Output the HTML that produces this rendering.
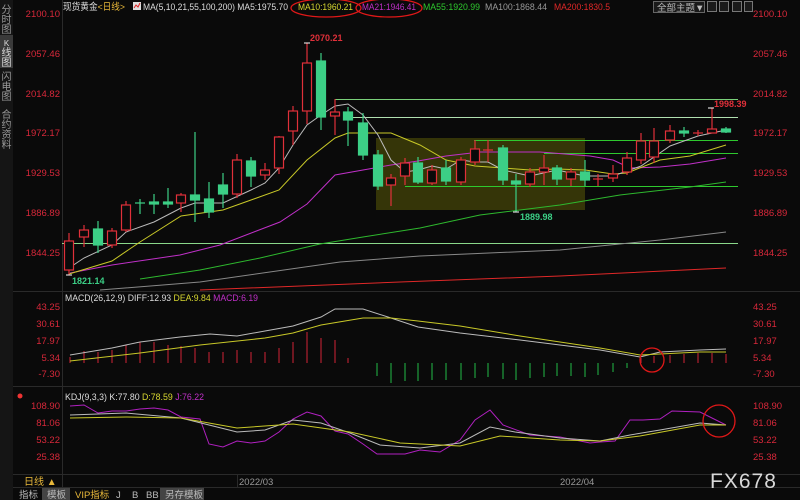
<!DOCTYPE html>
<html><head><meta charset="utf-8"><style>
html,body{margin:0;padding:0;background:#0a0a0a;width:800px;height:500px;overflow:hidden}
svg{display:block;font-family:"Liberation Sans","Noto Sans CJK SC",sans-serif}
</style></head><body>
<svg width="800" height="500" viewBox="0 0 800 500" xmlns="http://www.w3.org/2000/svg">
<rect width="800" height="500" fill="#0a0a0a"/>
<!-- sidebar -->
<rect x="0" y="0" width="13" height="500" fill="#151515"/>
<rect x="0" y="35" width="13" height="33" fill="#3a3a3a"/>
<g fill="#9a9a9a" font-size="10" text-anchor="middle">
<text x="6.5" y="13">分</text><text x="6.5" y="23">时</text><text x="6.5" y="33">图</text>
<text x="6.5" y="46" fill="#ddd" font-size="8">K</text><text x="6.5" y="56" fill="#ddd">线</text><text x="6.5" y="66" fill="#ddd">图</text>
<text x="6.5" y="80">闪</text><text x="6.5" y="90">电</text><text x="6.5" y="100">图</text>
<text x="6.5" y="118">合</text><text x="6.5" y="128">约</text><text x="6.5" y="138">资</text><text x="6.5" y="148">料</text>
</g>
<!-- borders -->
<line x1="62.5" y1="0" x2="62.5" y2="487" stroke="#2a2a2a"/>
<line x1="13" y1="291.5" x2="800" y2="291.5" stroke="#2a2a2a"/>
<line x1="13" y1="386.5" x2="800" y2="386.5" stroke="#2a2a2a"/>
<line x1="13" y1="474.5" x2="800" y2="474.5" stroke="#2a2a2a"/>
<line x1="13" y1="487.5" x2="800" y2="487.5" stroke="#2a2a2a"/>
<!-- axis labels -->
<g fill="#d8283a" font-size="9.5">
<g text-anchor="end">
<text x="60" y="17">2100.10</text><text x="60" y="57">2057.46</text><text x="60" y="97">2014.82</text><text x="60" y="136">1972.17</text><text x="60" y="176">1929.53</text><text x="60" y="216">1886.89</text><text x="60" y="256">1844.25</text>
<text x="60" y="310">43.25</text><text x="60" y="327">30.61</text><text x="60" y="344">17.97</text><text x="60" y="361">5.34</text><text x="60" y="377">-7.30</text>
<text x="60" y="409">108.90</text><text x="60" y="426">81.06</text><text x="60" y="443">53.22</text><text x="60" y="460">25.38</text>
</g>
<text x="753" y="17">2100.10</text><text x="753" y="57">2057.46</text><text x="753" y="97">2014.82</text><text x="753" y="136">1972.17</text><text x="753" y="176">1929.53</text><text x="753" y="216">1886.89</text><text x="753" y="256">1844.25</text>
<text x="753" y="310">43.25</text><text x="753" y="327">30.61</text><text x="753" y="344">17.97</text><text x="753" y="361">5.34</text><text x="753" y="377">-7.30</text>
<text x="753" y="409">108.90</text><text x="753" y="426">81.06</text><text x="753" y="443">53.22</text><text x="753" y="460">25.38</text>
</g>
<!-- header -->
<g font-size="9.5">
<text x="63" y="10" fill="#ddd" textLength="62" lengthAdjust="spacingAndGlyphs">现货黄金<tspan fill="#e8b83a">&lt;日线&gt;</tspan></text>
<rect x="133" y="2" width="8" height="8" fill="#ddd"/><path d="M134 8 L136 5 L138 7 L140 3" stroke="#d22" fill="none"/>
<text x="143" y="10" fill="#ddd" textLength="145" lengthAdjust="spacingAndGlyphs">MA(5,10,21,55,100,200) MA5:1975.70</text>
<text x="298" y="10" fill="#d8d830" textLength="55" lengthAdjust="spacingAndGlyphs">MA10:1960.21</text>
<text x="362" y="10" fill="#c030c8" textLength="54" lengthAdjust="spacingAndGlyphs">MA21:1946.41</text>
<text x="423" y="10" fill="#2ec82e" textLength="57" lengthAdjust="spacingAndGlyphs">MA55:1920.99</text>
<text x="485" y="10" fill="#999" textLength="62" lengthAdjust="spacingAndGlyphs">MA100:1868.44</text>
<text x="554" y="10" fill="#e02828" textLength="56" lengthAdjust="spacingAndGlyphs">MA200:1830.5</text>
<text x="65" y="301" fill="#ddd" textLength="193" lengthAdjust="spacingAndGlyphs">MACD(26,12,9) DIFF:12.93 <tspan fill="#d8d830">DEA:9.84</tspan> <tspan fill="#c030c8">MACD:6.19</tspan></text>
<text x="65" y="400" fill="#ddd" textLength="139" lengthAdjust="spacingAndGlyphs">KDJ(9,3,3) K:77.80 <tspan fill="#d8d830">D:78.59</tspan> <tspan fill="#c030c8">J:76.22</tspan></text>
</g>
<circle cx="20" cy="396" r="2.5" fill="#e33"/>
<rect x="653.5" y="1.5" width="51" height="11" fill="#1a1a1a" stroke="#666"/>
<text x="657" y="11" font-size="9.5" fill="#bbb">全部主题▼</text>
<g fill="#1a1a1a" stroke="#777"><rect x="707.5" y="1.5" width="9" height="10"/><rect x="719.5" y="1.5" width="9" height="10"/><rect x="732.5" y="1.5" width="9" height="10"/><rect x="744.5" y="1.5" width="8" height="10"/></g>
<ellipse cx="326" cy="8" rx="35" ry="9" fill="none" stroke="#e01818" stroke-width="1.3"/>
<ellipse cx="389" cy="8" rx="33" ry="9" fill="none" stroke="#e01818" stroke-width="1.3"/>
<!-- box -->
<rect x="376" y="138" width="209" height="72" fill="#3a3a08" opacity="0.9"/>
<!-- horizontal lines -->
<g stroke-width="1">
<line x1="335" y1="99.5" x2="738" y2="99.5" stroke="#7ad07a"/>
<line x1="348" y1="117.5" x2="738" y2="117.5" stroke="#b0e0b0"/>
<line x1="474" y1="140.5" x2="738" y2="140.5" stroke="#2ec82e"/>
<line x1="544" y1="153.5" x2="738" y2="153.5" stroke="#2ec82e"/>
<line x1="405" y1="186.5" x2="738" y2="186.5" stroke="#2ec82e"/>
<line x1="62" y1="243.5" x2="738" y2="243.5" stroke="#8ad88a"/>
</g>
<!-- MAs -->
<g fill="none" stroke-width="1">
<polyline stroke="#e02828" points="200,290 400,282 560,276 726,268"/>
<polyline stroke="#888" points="100,290 200,282 340,262 420,256 560,250 660,240 726,232"/>
<polyline stroke="#2eb82e" points="140,279 200,270 260,258 320,244 363,237 420,228 480,215 560,205 620,195 690,187 726,182"/>
<polyline stroke="#c030c8" points="70,273 112,265 180,255 220,245 280,222 307,204 335,175 363,170 391,165 418,161 446,156 480,152 540,152 590,156 613,160 630,168 660,167 690,164 726,158"/>
<polyline stroke="#c8c828" points="69,274 112,261 140,242 181,216 223,210 251,200 279,190 307,160 335,138 348,133 363,133 391,133 420,145 446,160 475,166 503,168 530,170 557,169 585,170 613,174 627,173 660,160 690,156 726,145"/>
<polyline stroke="#bbb" points="69,268 84,258 112,245 126,232 154,222 181,208 195,203 223,203 251,190 265,183 279,168 293,145 307,125 321,115 335,106 348,104 363,115 378,135 391,160 405,172 418,170 432,166 446,169 461,160 475,162 488,162 503,170 530,176 557,170 585,176 613,176 641,166 670,146 698,136 726,130"/>
</g>
<!-- candles -->
<g stroke-width="1.2">
<g stroke="#e0303a" fill="#0a0a0a">
<line x1="69" y1="233" x2="69" y2="275"/><rect x="64.5" y="241" width="9" height="29"/>
<line x1="84" y1="225" x2="84" y2="247"/><rect x="79.5" y="230" width="9" height="7"/>
<line x1="112" y1="228" x2="112" y2="248"/><rect x="107.5" y="231" width="9" height="14"/>
<line x1="126" y1="201" x2="126" y2="232"/><rect x="121.5" y="205" width="9" height="25"/>
<line x1="181" y1="193" x2="181" y2="212"/><rect x="176.5" y="195" width="9" height="8"/>
<line x1="237" y1="154" x2="237" y2="198"/><rect x="232.5" y="160" width="9" height="34"/>
<line x1="265" y1="163" x2="265" y2="180"/><rect x="260.5" y="170" width="9" height="5"/>
<line x1="279" y1="136" x2="279" y2="174"/><rect x="274.5" y="137" width="9" height="31"/>
<line x1="293" y1="106" x2="293" y2="145"/><rect x="288.5" y="111" width="9" height="20"/>
<line x1="307" y1="43" x2="307" y2="124"/><rect x="302.5" y="63" width="9" height="48"/>
<line x1="335" y1="99" x2="335" y2="135"/><rect x="330.5" y="112" width="9" height="4"/>
<line x1="391" y1="174" x2="391" y2="206"/><rect x="386.5" y="178" width="9" height="7"/>
<line x1="405" y1="158" x2="405" y2="185"/><rect x="400.5" y="163" width="9" height="13"/>
<line x1="432" y1="165" x2="432" y2="185"/><rect x="427.5" y="170" width="9" height="13"/>
<line x1="461" y1="157" x2="461" y2="185"/><rect x="456.5" y="160" width="9" height="22"/>
<line x1="475" y1="140" x2="475" y2="165"/><rect x="470.5" y="149" width="9" height="13"/>
<line x1="488" y1="140" x2="488" y2="162"/><line x1="483" y1="150" x2="493" y2="150"/>
<line x1="530" y1="168" x2="530" y2="187"/><rect x="525.5" y="172" width="9" height="12"/>
<line x1="544" y1="155" x2="544" y2="185"/><rect x="539.5" y="168" width="9" height="4"/>
<line x1="571" y1="168" x2="571" y2="186"/><rect x="566.5" y="172" width="9" height="7"/>
<line x1="598" y1="174" x2="598" y2="186"/><line x1="593" y1="179" x2="603" y2="179"/>
<line x1="613" y1="165" x2="613" y2="182"/><rect x="608.5" y="174" width="9" height="4"/>
<line x1="627" y1="152" x2="627" y2="175"/><rect x="622.5" y="158" width="9" height="14"/>
<line x1="641" y1="133" x2="641" y2="164"/><rect x="636.5" y="141" width="9" height="19"/>
<line x1="654" y1="128" x2="654" y2="163"/><rect x="649.5" y="141" width="9" height="16"/>
<line x1="670" y1="125" x2="670" y2="143"/><rect x="665.5" y="131" width="9" height="9"/>
<line x1="698" y1="130" x2="698" y2="136"/><line x1="693" y1="133" x2="703" y2="133"/>
<line x1="712" y1="108" x2="712" y2="133"/><rect x="707.5" y="129" width="9" height="4"/>
</g>
<g stroke="#3ccf86" fill="#3ccf86">
<line x1="98" y1="221" x2="98" y2="253"/><rect x="93.5" y="229" width="9" height="16"/>
<line x1="140" y1="199" x2="140" y2="214"/><line x1="135" y1="203" x2="145" y2="203"/>
<line x1="154" y1="194" x2="154" y2="214"/><rect x="149.5" y="202" width="9" height="2"/>
<line x1="168" y1="188" x2="168" y2="208"/><rect x="163.5" y="202" width="9" height="2"/>
<line x1="195" y1="132" x2="195" y2="222"/><rect x="190.5" y="195" width="9" height="5"/>
<line x1="209" y1="182" x2="209" y2="218"/><rect x="204.5" y="199" width="9" height="13"/>
<line x1="223" y1="173" x2="223" y2="208"/><rect x="218.5" y="185" width="9" height="9"/>
<line x1="251" y1="157" x2="251" y2="187"/><rect x="246.5" y="161" width="9" height="15"/>
<line x1="321" y1="53" x2="321" y2="130"/><rect x="316.5" y="61" width="9" height="56"/>
<line x1="348" y1="107" x2="348" y2="146"/><rect x="343.5" y="112" width="9" height="8"/>
<line x1="363" y1="113" x2="363" y2="160"/><rect x="358.5" y="123" width="9" height="32"/>
<line x1="378" y1="150" x2="378" y2="190"/><rect x="373.5" y="155" width="9" height="31"/>
<line x1="418" y1="157" x2="418" y2="184"/><rect x="413.5" y="163" width="9" height="19"/>
<line x1="446" y1="160" x2="446" y2="185"/><rect x="441.5" y="168" width="9" height="13"/>
<line x1="503" y1="145" x2="503" y2="185"/><rect x="498.5" y="148" width="9" height="32"/>
<line x1="516" y1="174" x2="516" y2="212"/><rect x="511.5" y="181" width="9" height="3"/>
<line x1="557" y1="165" x2="557" y2="185"/><rect x="552.5" y="168" width="9" height="11"/>
<line x1="585" y1="160" x2="585" y2="186"/><rect x="580.5" y="172" width="9" height="8"/>
<line x1="684" y1="127" x2="684" y2="137"/><rect x="679.5" y="131" width="9" height="2"/>
<line x1="726" y1="127" x2="726" y2="133"/><rect x="721.5" y="129" width="9" height="3"/>
</g>
</g>
<g font-size="9" font-weight="bold">
<text x="310" y="41" fill="#e0303a">2070.21</text>
<text x="714" y="107" fill="#e0303a">1998.39</text>
<text x="520" y="220" fill="#3ccf86">1889.98</text>
<text x="72" y="284" fill="#3ccf86">1821.14</text>
</g>
<path d="M304 43h6M714 108h-6M513 212h6M66 275h6" stroke="#fff"/>
<!-- MACD bars -->
<g stroke="#b02030" stroke-width="1.2">
<path d="M70 363V357M84 363V351M98 363V352M112 363V350M126 363V345M140 363V342M154 363V342M168 363V345M181 363V346M195 363V348M209 363V352M223 363V352M237 363V350M251 363V352M265 363V352M279 363V348M293 363V342M307 363V332M321 363V338M335 363V340M348 363V358"/>
<path d="M641 363V358M654 363V356M670 363V355M684 363V354M698 363V353M712 363V353M726 363V354"/>
</g>
<g stroke="#1e9e3e" stroke-width="1.2">
<path d="M377 363V376M391 363V383M405 363V381M418 363V381M432 363V380M446 363V380M461 363V380M475 363V378M488 363V377M503 363V379M516 363V380M530 363V378M544 363V377M557 363V376M571 363V376M585 363V377M598 363V375M613 363V372M627 363V368"/>
</g>
<polyline fill="none" stroke="#bbb" points="70,355 112,348 140,342 180,337 210,334 237,336 265,331 293,326 321,317 335,309 363,309 391,318 418,327 460,333 520,340 600,350 640,357 660,352 700,350 726,349"/>
<polyline fill="none" stroke="#c8c828" points="70,361 140,353 200,345 265,338 293,333 321,325 363,318 391,318 418,321 460,326 520,336 600,348 640,355 700,352 726,352"/>
<circle cx="652" cy="360" r="12" fill="none" stroke="#e01818" stroke-width="1.3"/>
<!-- KDJ -->
<polyline fill="none" stroke="#b020c0" points="70,406 84,405 98,413 112,411 126,411 140,409 154,408 168,410 181,417 200,419 209,444 223,447 237,441 251,443 265,441 279,432 293,419 307,412 321,416 335,431 348,434 363,444 377,454 405,454 420,450 440,452 460,440 475,420 490,410 503,425 530,435 560,437 590,443 600,442 615,441 630,420 643,420 660,419 672,411 700,412 726,425"/>
<polyline fill="none" stroke="#bbb" points="70,415 126,413 181,418 209,425 237,432 265,430 293,420 321,423 350,433 380,445 420,448 460,443 490,427 515,432 560,438 600,441 630,435 660,430 700,423 726,425"/>
<polyline fill="none" stroke="#c8c828" points="70,418 126,417 181,418 237,428 293,424 350,432 400,443 460,446 500,436 560,440 600,441 640,436 700,425 726,425"/>
<circle cx="719" cy="421" r="16" fill="none" stroke="#e01818" stroke-width="1.3"/>
<!-- bottom -->
<line x1="237.5" y1="475" x2="237.5" y2="487" stroke="#2a2a2a"/>
<text x="24" y="485" font-size="10" fill="#e8b83a">日线 ▲</text>
<text x="239" y="485" font-size="9.5" fill="#999">2022/03</text>
<text x="560" y="485" font-size="9.5" fill="#999">2022/04</text>
<rect x="42" y="488" width="28" height="12" fill="#444"/>
<rect x="160" y="488" width="44" height="12" fill="#444"/>
<g font-size="9.5" fill="#bbb">
<text x="19" y="498">指标</text><text x="47" y="498">模板</text>
<text x="75" y="498" fill="#e8b83a">VIP指标</text>
<text x="116" y="498">J</text><text x="132" y="498">B</text><text x="146" y="498">BB</text>
<text x="165" y="498">另存模板</text>
</g>
<text x="710" y="488" font-size="21" fill="#d8d8d8" letter-spacing="1">FX678</text>
</svg>
</body></html>
